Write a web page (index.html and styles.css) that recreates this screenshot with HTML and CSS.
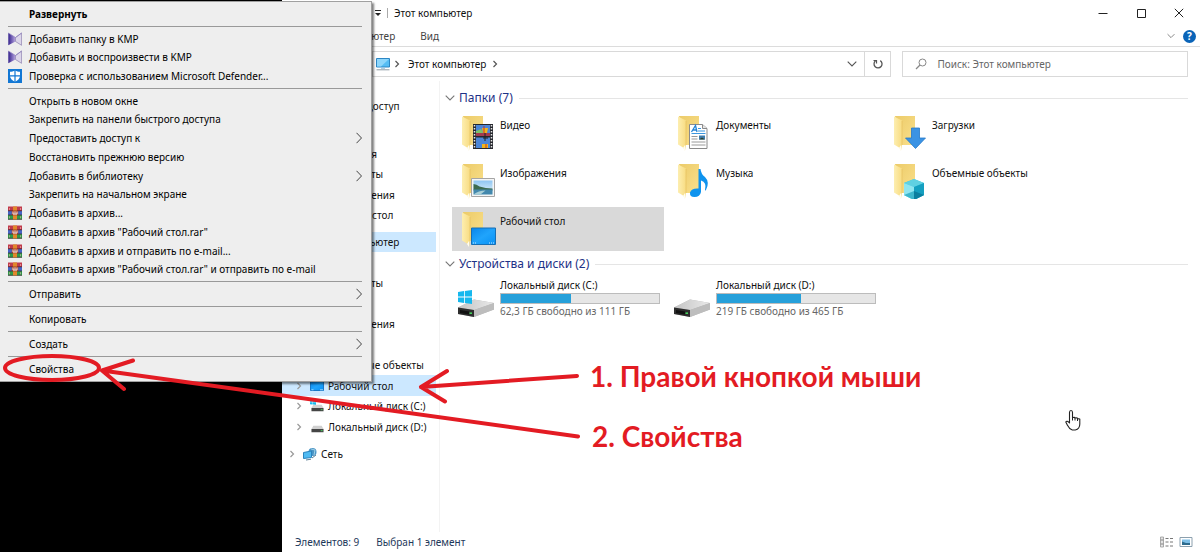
FILE: index.html
```html
<!DOCTYPE html>
<html lang="ru">
<head>
<meta charset="utf-8">
<title>Этот компьютер</title>
<link rel="stylesheet" href="styles.css">
</head>
<body>
<svg class="defs" width="0" height="0" aria-hidden="true">
  <defs>
    <linearGradient id="gFold" x1="0" x2="1"><stop offset="0" stop-color="#fdeeb0"/><stop offset="1" stop-color="#f8dc82"/></linearGradient>
    <linearGradient id="gBack" x1="0" x2="1" y1="0" y2="1"><stop offset="0" stop-color="#eccb69"/><stop offset="1" stop-color="#fae08c"/></linearGradient>
    <linearGradient id="gBlue" x1="0" x2="1" y1="0" y2="1"><stop offset="0" stop-color="#0a86ea"/><stop offset=".5" stop-color="#20a4fc"/><stop offset="1" stop-color="#0891f5"/></linearGradient>
    <linearGradient id="gKmp" x1="0" x2="1"><stop offset="0" stop-color="#33208c"/><stop offset="1" stop-color="#b9a8e0"/></linearGradient>
    <linearGradient id="gDisk" x1="0" x2="1"><stop offset="0" stop-color="#c4c4c4"/><stop offset="1" stop-color="#e9e9e9"/></linearGradient>
    <linearGradient id="gSky" x1="0" x2="0" y1="0" y2="1"><stop offset="0" stop-color="#8fc6f2"/><stop offset="1" stop-color="#e9f5fb"/></linearGradient>
    <symbol id="folder" viewBox="0 0 36 36">
      <path d="M2 1h20v29H8z" fill="url(#gBack)"/>
      <path d="M1 1.500l8 4v24l-1 6-2-3-5-3z" fill="url(#gFold)"/>
      <path d="M9 6v24" stroke="#e3be5c" stroke-width=".6"/>
      <path d="M6 33l2-3v6z" fill="#fffdf2"/>
    </symbol>
    <symbol id="kmp" viewBox="0 0 14 14">
      <path d="M.3 1L7.500 5.500v4L.3 13.300z" fill="url(#gKmp)"/>
      <path d="M13.600 1L7.500 5.500v4l6.100 3.800z" fill="#dcd6ea" stroke="#8a7eae" stroke-width=".7"/>
      <path d="M.5 1L7.500 5.500 13.600 1" fill="none" stroke="#8d7fc0" stroke-width=".7"/>
    </symbol>
    <symbol id="defender" viewBox="0 0 14 14">
      <path d="M0 0h14v14H0z" fill="#1277d4"/>
      <path d="M7 1.500c1.500 1 3.300 1.200 5 1.200v4c0 3-2.500 5-5 6-2.500-1-5-3-5-6v-4c1.700 0 3.500-.2 5-1.200z" fill="#fff"/>
      <path d="M7 1v12M1.500 6.900h11" stroke="#1277d4" stroke-width="1.200"/>
    </symbol>
    <symbol id="rar" viewBox="0 0 14 14">
      <path d="M0 .5h14v4.500H0z" fill="#c03a4a"/><path d="M0 5h14v4H0z" fill="#4565c4"/><path d="M0 9h14v4.500H0z" fill="#2f9a48"/>
      <path d="M0 4.800h14M0 9h14M0 13.300h14" stroke="#3c2334" stroke-width=".7"/>
      <path d="M5 .5h4v13H5z" fill="#e0872b"/>
      <path d="M3.800 4.500h6.400v4.800H3.800z" fill="#a33d22"/><path d="M5 5.500v2.600h4V5.500M7 5.300v2.500" fill="none" stroke="#fff" stroke-width=".9"/>
      <path d="M1.500 2v2M12.500 2v2M1.500 10.300v2M12.500 10.300v2" stroke="#f2b8b8" stroke-width=".6"/>
    </symbol>
    <symbol id="arrow" viewBox="0 0 6 12"><path d="M.5 .8L5.500 6 .5 11.200" fill="none" stroke="#444" stroke-width="1"/></symbol>
    <symbol id="chev" viewBox="0 0 6 8"><path d="M1.500 1L4.500 4 1.500 7" fill="none" stroke="currentColor" stroke-width="1.200"/></symbol>
    <symbol id="down" viewBox="0 0 10 6"><path d="M.7 .7L5 5 9.300 .7" fill="none" stroke="currentColor" stroke-width="1.100"/></symbol>
    <symbol id="pc" viewBox="0 0 14 14">
      <path d="M.5 1.500h13v8.500H.5z" fill="#55bdf4" stroke="#2c86c4"/><path d="M1 2h12L5 9.500H1z" fill="#8dd6fb"/>
      <path d="M5 11.300h4" stroke="#9bc4de"/><path d="M.5 12.800h13" stroke="#8d9aa3"/>
    </symbol>
    <symbol id="desk" viewBox="0 0 14 10"><path d="M.5 .5h13v9H.5z" fill="url(#gBlue)" stroke="#1678c8"/><path d="M1.500 8.800h2M10 8.800h3" stroke="#bfe4ff" stroke-width=".8"/></symbol>
    <symbol id="disk" viewBox="0 0 38 20">
      <path d="M1 9.500L17 1.500 37 5v6.500L17 19 1 16z" fill="#b5b5b5"/>
      <path d="M1 9.500L17 1.500 37 5 17 12z" fill="url(#gDisk)"/>
      <path d="M17 12L37 5v6.500L17 19z" fill="#bdbdbd"/>
      <path d="M1 9.500L17 12v7L1 16z" fill="#2d2d2d"/>
      <path d="M3 12l9 1.500v3L3 15z" fill="#111"/><path d="M12.500 15.200h2.500" stroke="#43d35b" stroke-width="1.600"/>
    </symbol>
    <symbol id="mdisk" viewBox="0 0 14 8"><path d="M2.500 .5h9L13.500 4H.5z" fill="#d0d0d0"/><path d="M.5 4h13v3.500H.5z" fill="#454545"/><path d="M10.500 5.800h2" stroke="#46d660"/></symbol>
    <symbol id="win" viewBox="0 0 14 14"><path d="M0 2l6-.9v5.500H0zM6.800 1L14 0v6.600H6.800zM0 7.400h6v5.500L0 12zM6.800 7.400H14V14l-7.200-1z" fill="#16b8ee"/></symbol>
  </defs>
</svg>

<div class="window">
  <header class="titlebar">
    <svg class="qat" viewBox="0 0 8 8"><path d="M1 1.500h6" stroke="#222"/><path d="M1 4h6L4 7z" fill="#222"/></svg>
    <span class="bar"></span>
    <h1 class="title">Этот компьютер</h1>
    <div class="controls">
      <button class="ctl" aria-label="Свернуть"><svg viewBox="0 0 10 10"><path d="M.5 5.500h9" stroke="#222"/></svg></button>
      <button class="ctl" aria-label="Развернуть окно"><svg viewBox="0 0 10 10"><path d="M1.500 1.500h8v8h-8z" fill="none" stroke="#222"/></svg></button>
      <button class="ctl" aria-label="Закрыть"><svg viewBox="0 0 10 10"><path d="M.8 .8l8.400 8.400M9.200 .8L.8 9.200" stroke="#222"/></svg></button>
    </div>
  </header>
  <nav class="tabs">
    <button class="tab">Компьютер</button>
    <button class="tab">Вид</button>
    <div class="helpers">
      <svg class="down"><use href="#down"/></svg>
      <button class="help" aria-label="Справка">?</button>
    </div>
  </nav>
  <div class="address">
    <div class="path">
      <svg class="i14"><use href="#pc"/></svg>
      <svg class="crumb"><use href="#chev"/></svg>
      <span class="where">Этот компьютер</span>
      <svg class="crumb"><use href="#chev"/></svg>
      <svg class="down dark"><use href="#down"/></svg>
      <button class="refresh" aria-label="Обновить"><svg viewBox="0 0 12 12"><path d="M3.500 2.800A4 4 0 1 0 8.300 2.600" fill="none" stroke="#555" stroke-width="1.300"/><path d="M1.500 2.500h3v3" fill="none" stroke="#555" stroke-width="1.200"/></svg></button>
    </div>
    <div class="search">
      <svg class="lens" viewBox="0 0 12 12"><circle cx="7.500" cy="4.500" r="3.500" fill="none" stroke="#888"/><path d="M5 7L1 11" stroke="#888" stroke-width="1.200"/></svg>
      <input class="query" type="text" aria-label="Поиск" placeholder="Поиск: Этот компьютер">
    </div>
  </div>

  <div class="body">
    <aside class="tree">
      <ul class="branch">
        <li class="node root">Быстрый доступ</li>
      </ul>
      <ul class="branch">
        <li class="node root">OneDrive</li>
        <li class="node">Вложения</li>
        <li class="node">Документы</li>
        <li class="node">Изображения</li>
        <li class="node">Рабочий стол</li>
      </ul>
      <ul class="branch">
        <li class="node root on">Этот компьютер</li>
        <li class="node">Видео</li>
        <li class="node">Документы</li>
        <li class="node">Музыка</li>
        <li class="node">Изображения</li>
        <li class="node">Загрузки</li>
        <li class="node">Объемные объекты</li>
        <li class="node on"><svg class="crumb"><use href="#chev"/></svg><svg class="i14"><use href="#desk"/></svg>Рабочий стол</li>
        <li class="node"><svg class="crumb"><use href="#chev"/></svg><svg class="i14" viewBox="0 0 14 14"><use href="#win" width="6" height="6"/><use href="#mdisk" y="5" x="1" width="13" height="8"/></svg>Локальный диск (C:)</li>
        <li class="node"><svg class="crumb"><use href="#chev"/></svg><svg class="i14" viewBox="0 0 14 14"><use href="#mdisk" y="5" x="1" width="13" height="8"/></svg>Локальный диск (D:)</li>
      </ul>
      <ul class="branch">
        <li class="node root"><svg class="crumb"><use href="#chev"/></svg><svg class="i14" viewBox="0 0 14 14"><circle cx="9.500" cy="5" r="4" fill="#4a94c4"/><path d="M8 2l4 1-1 5" fill="none" stroke="#9fd0e8"/><path d="M.5 5.500l8-1.500v6.500l-8 1z" fill="#4fbaf2" stroke="#2b83bd"/><path d="M3 13l5-.8M9 11l4-3" stroke="#5d7f96"/></svg>Сеть</li>
      </ul>
    </aside>

    <main class="content">
      <section class="group">
        <h2 class="head"><svg class="down"><use href="#down"/></svg>Папки (7)</h2>
        <div class="tiles">
          <button class="tile"><svg class="big" viewBox="0 0 36 36"><use href="#folder"/>
            <path d="M12 9h20v25H12z" fill="#26282e"/><path d="M15 10h14v11H15zM15 22.500h14V33H15z" fill="#4c86d8"/>
            <path d="M15 18h14v3H15z" fill="#a33b4e"/><path d="M15 16l5-2 2 4h-7z" fill="#7cc26a"/><path d="M21 13h6l-1 5h-4zM21 29h6v4h-6z" fill="#f1b51c"/><path d="M24 18v8M22 23h5" stroke="#222"/><path d="M23 11v7M25 29v4" stroke="#c3342b"/>
            <path d="M13.500 10v24M30.500 10v24" stroke="#e8e8e8" stroke-width="1.500" stroke-dasharray="1.500 1.500"/></svg><span class="name">Видео</span></button>
          <button class="tile"><svg class="big" viewBox="0 0 36 36"><use href="#folder"/>
            <path d="M12.500 9.500h13l4.500 4v20H12.500z" fill="#fff" stroke="#8a8a8a"/><path d="M25.500 9.500v4H30" fill="#e6e6e6" stroke="#8a8a8a"/>
            <path d="M14.500 17l4-6.500 1.500 6.500M16 15h4" fill="none" stroke="#2484d6" stroke-width="1.300"/><path d="M21 13.500h3M21 16h7M14.500 18.500h14" stroke="#3b97e0"/><path d="M14.500 21.500h6M14.500 24h6M14.500 27h14M14.500 30h14" stroke="#9a9a9a"/><path d="M22 20.500h6v4h-6z" fill="#3f7cab"/><path d="M22 24.500l3-2 3 2z" fill="#29402f"/></svg><span class="name">Документы</span></button>
          <button class="tile"><svg class="big" viewBox="0 0 36 36"><use href="#folder"/><path d="M18.500 13h8v10h6L22.500 33.500 12.500 23h6z" fill="#3b93e4" stroke="#2478c9" stroke-width=".8"/></svg><span class="name">Загрузки</span></button>
          <button class="tile"><svg class="big" viewBox="0 0 36 36"><use href="#folder"/>
            <path d="M10.500 15.500h23v18h-23z" fill="#f5f5f5" stroke="#a5a5a5"/><path d="M12.500 17.500h19v14h-19z" fill="url(#gSky)"/><path d="M12.500 21q3 0 6 2.500 6 2 13 2v2h-19z" fill="#3d6b50"/><path d="M12.500 26.500h19v5h-19z" fill="#4388ad"/><path d="M12.500 31.500q5-4 12-4l-5 4z" fill="#a9cfd6"/></svg><span class="name">Изображения</span></button>
          <button class="tile"><svg class="big" viewBox="0 0 36 36"><use href="#folder"/><path d="M21.500 6h2q.5 5 4.500 8 5 5 1 13-.5 1-1 0 2-8-4-9.500V29q-1 5-6.500 5-5 0-4.500-4.500 1.500-4.500 8.500-4z" fill="#0f93ee"/></svg><span class="name">Музыка</span></button>
          <button class="tile"><svg class="big" viewBox="0 0 36 36"><use href="#folder"/><path d="M11 20l10-4 10 4v12l-10 5-10-5z" fill="#35c3dd"/><path d="M11 20l10-4 10 4-10 4z" fill="#5fd0e2"/><path d="M11 20l10 4v13l-10-5z" fill="#8fe5f0"/><path d="M21 24l10-4v12l-10 5z" fill="#149fc0"/><path d="M21 28l10 4-10 5z" fill="#0b7f9f"/><path d="M11 32l10-4v9z" fill="#3db7cd"/></svg><span class="name">Объемные объекты</span></button>
          <button class="tile picked"><svg class="big" viewBox="0 0 36 36"><use href="#folder"/><path d="M10.500 17h24v16.500h-24z" fill="url(#gBlue)" stroke="#176fb5"/><path d="M12 32h3M28 32h5" stroke="#c8e8ff" stroke-dasharray="1 1"/></svg><span class="name">Рабочий стол</span></button>
        </div>
      </section>
      <section class="group">
        <h2 class="head"><svg class="down"><use href="#down"/></svg>Устройства и диски (2)</h2>
        <div class="tiles">
          <button class="tile drive"><svg class="hdd" viewBox="0 0 38 30"><use href="#disk" y="9" width="38" height="20"/><use href="#win" x="1" y="1" width="14" height="14"/></svg>
            <span class="info"><span>Локальный диск (C:)</span><span class="meter"><span class="used" style="width:44%"></span></span><span class="free">62,3 ГБ свободно из 111 ГБ</span></span></button>
          <button class="tile drive"><svg class="hdd" viewBox="0 0 38 30"><use href="#disk" y="9" width="38" height="20"/></svg>
            <span class="info"><span>Локальный диск (D:)</span><span class="meter"><span class="used" style="width:53%"></span></span><span class="free">219 ГБ свободно из 465 ГБ</span></span></button>
        </div>
      </section>
    </main>
  </div>

  <footer class="status">
    <span>Элементов: 9</span><span>Выбран 1 элемент</span>
    <div class="views">
      <svg class="view" viewBox="0 0 14 12"><path d="M.5 1h3v3h-3zM.5 4h3v4h-3zM.5 8h3v3h-3z" fill="#e4e4e4" stroke="#999" stroke-width=".8"/><path d="M5.500 2.500h8M5.500 6h8M5.500 10h8" stroke="#777" stroke-dasharray="3 1.500"/></svg>
      <svg class="view" viewBox="0 0 14 12"><path d="M1 1.500h12v9H1z" fill="#fff" stroke="#8ca0ae"/><path d="M3 3.500h8V9H3z" fill="#7dbfe8"/><path d="M3 5.500l4 1.500h4v2H3z" fill="#2d6b8e"/></svg>
    </div>
  </footer>
</div>

<div class="menu" role="menu">
  <div class="part">
    <button class="item strong" role="menuitem"><span class="slot"></span>Развернуть</button>
  </div>
  <div class="part">
    <button class="item" role="menuitem"><svg class="slot"><use href="#kmp"/></svg>Добавить папку в KMP</button>
    <button class="item" role="menuitem"><svg class="slot"><use href="#kmp"/></svg>Добавить и воспроизвести в KMP</button>
    <button class="item" role="menuitem"><svg class="slot"><use href="#defender"/></svg>Проверка с использованием Microsoft Defender...</button>
  </div>
  <div class="part">
    <button class="item" role="menuitem"><span class="slot"></span>Открыть в новом окне</button>
    <button class="item" role="menuitem"><span class="slot"></span>Закрепить на панели быстрого доступа</button>
    <button class="item" role="menuitem"><span class="slot"></span>Предоставить доступ к<svg class="more"><use href="#arrow"/></svg></button>
    <button class="item" role="menuitem"><span class="slot"></span>Восстановить прежнюю версию</button>
    <button class="item" role="menuitem"><span class="slot"></span>Добавить в библиотеку<svg class="more"><use href="#arrow"/></svg></button>
    <button class="item" role="menuitem"><span class="slot"></span>Закрепить на начальном экране</button>
    <button class="item" role="menuitem"><svg class="slot"><use href="#rar"/></svg>Добавить в архив...</button>
    <button class="item" role="menuitem"><svg class="slot"><use href="#rar"/></svg>Добавить в архив "Рабочий стол.rar"</button>
    <button class="item" role="menuitem"><svg class="slot"><use href="#rar"/></svg>Добавить в архив и отправить по e-mail...</button>
    <button class="item" role="menuitem"><svg class="slot"><use href="#rar"/></svg>Добавить в архив "Рабочий стол.rar" и отправить по e-mail</button>
  </div>
  <div class="part">
    <button class="item" role="menuitem"><span class="slot"></span>Отправить<svg class="more"><use href="#arrow"/></svg></button>
  </div>
  <div class="part">
    <button class="item" role="menuitem"><span class="slot"></span>Копировать</button>
  </div>
  <div class="part">
    <button class="item" role="menuitem"><span class="slot"></span>Создать<svg class="more"><use href="#arrow"/></svg></button>
  </div>
  <div class="part">
    <button class="item" role="menuitem"><span class="slot"></span>Свойства</button>
  </div>
</div>

<svg class="marks" width="1200" height="552" viewBox="0 0 1200 552" aria-hidden="true">
  <g fill="none" stroke="#e31b23" stroke-width="4" stroke-linecap="round" stroke-linejoin="round">
    <ellipse cx="52" cy="368" rx="47" ry="12"/>
    <path d="M133 360.500L102 370.500 124 389M102 370.500L578 436.500"/>
    <path d="M447 371L421 387l24 14.500M421 387L577 376"/>
  </g>
  <path d="M1069.500 421v-8.500q0-2 1.500-2t1.500 2v5l2-.3.5.8 2-.2.8.8 2 .4v5q0 5-4.500 6h-3q-3-1-5-5l-1.500-3q1-2 3.700 1z" fill="#fff" stroke="#222" stroke-width="1.100" stroke-linejoin="round"/>
  <path d="M1072.500 417v3.500M1075 417.500v3M1077.500 418.500v2.500" stroke="#222" stroke-width="1"/>
</svg>
<p class="note first">1. Правой кнопкой мыши</p>
<p class="note second">2. Свойства</p>
</body>
</html>
```
FILE: styles.css
```css
* { box-sizing: border-box; }
body {
  margin: 0;
  min-height: 100vh;
  display: flex;
  position: relative;
  padding-left: 282px;
  background: #000;
  color: #111;
  font: 10px/16px "Noto Sans", "Open Sans", sans-serif;
}
ul, h1, h2, p { margin: 0; padding: 0; list-style: none; font: inherit; }
button {
  margin: 0;
  padding: 0;
  border: 0;
  background: none;
  color: inherit;
  font: inherit;
  text-align: left;
}
svg { flex: none; display: block; }
.defs { position: absolute; }

.window { flex: 1; min-width: 0; display: flex; flex-direction: column; background: #fff; }
.titlebar { display: flex; align-items: center; height: 26px; padding: 0 2px 0 92px; }
.qat { width: 8px; height: 8px; }
.bar { width: 1px; height: 10px; margin: 0 6px 0 5px; background: #aaa; }
.controls { margin-left: auto; display: flex; }
.ctl { width: 38px; height: 26px; display: flex; align-items: center; justify-content: center; }
.ctl svg { width: 10px; height: 10px; }

.tabs { display: flex; align-items: center; height: 21px; padding: 0 4px 0 58px; border-bottom: 1px solid #dcdcdc; color: #444; }
.tab { margin-right: 25px; }
.helpers { margin-left: auto; display: flex; align-items: center; gap: 8px; color: #999; }
.down { width: 10px; height: 6px; color: #777; }
.helpers .down { width: 8px; }
.help { width: 13px; height: 13px; border-radius: 50%; background: #0a64b8; color: #fff; font-weight: 700; line-height: 13px; text-align: center; }

.address { display: flex; gap: 11px; padding: 4px 12px 4px 90px; }
.path, .search { display: flex; align-items: center; height: 26px; border: 1px solid #d9d9d9; }
.path { flex: 1; min-width: 0; padding-left: 3px; }
.path .down { margin-left: auto; margin-right: 7px; }
.search { width: 35%; max-width: 291px; padding-left: 12px; }
.i14 { width: 14px; height: 14px; }
.crumb { width: 6px; height: 8px; margin: 0 6px 0 4px; color: #555; }
.where { margin: 0 2px; }
.dark { color: #555; }
.refresh { width: 26px; height: 24px; border-left: 1px solid #d9d9d9; display: flex; align-items: center; justify-content: center; }
.refresh svg { width: 12px; height: 12px; }
.lens { width: 12px; height: 12px; }
.query { flex: 1; min-width: 0; margin-left: 10px; padding: 0; border: 0; outline: 0; background: none; font: inherit; }
.query::placeholder { color: #666; opacity: 1; }

.body { flex: 1; display: flex; }
.tree { width: 158px; padding: 15px 3px 0 0; border-right: 1px solid #f3f3f3; white-space: nowrap; }
.branch { margin-bottom: 7px; }
.node { display: flex; align-items: center; height: 20px; padding-left: 46px; }
.node:nth-child(even) { height: 21px; }
.root { padding-left: 39px; }
.on { background: #cce8ff; }
.node .crumb { color: #999; margin: 0 8px 0 0; }
.node .i14 { margin-right: 4px; }
.node:has(svg) { padding-left: 14px; }
.root:has(svg) { padding-left: 7px; }

.content { flex: 1; min-width: 0; padding: 8px 12px 0 5px; }
.head { display: flex; align-items: center; gap: 4px; height: 18px; color: #1e3287; font-size: 12px; }
.head::after { content: ""; flex: 1; height: 1px; margin-left: 2px; background: #e5e5e5; }
.tiles { display: grid; grid-template-columns: repeat(3, 212px); gap: 4px; padding: 4px 0 4px 7px; }
.tile { display: flex; align-items: flex-start; height: 44px; padding: 4px 0 0 9px; }
.picked { background: #d9d9d9; }
.big { width: 36px; height: 36px; margin-right: 3px; }
.name { padding-top: 2px; }
.drive { padding: 1px 4px 0 5px; gap: 5px; }
.hdd { width: 38px; height: 30px; margin-top: 11px; }
.info { display: grid; grid-template-columns: 160px; line-height: 15px; }
.meter { height: 11px; border: 1px solid #bcbcbc; background: #e6e6e6; }
.used { display: block; height: 100%; background: #26a0da; }
.free { color: #666; }

.status { display: flex; align-items: center; gap: 17px; height: 20px; padding: 0 7px 0 13px; color: #1e395b; }
.views { margin-left: auto; display: flex; gap: 5px; }
.view { width: 14px; height: 12px; }

.menu {
  position: absolute;
  left: 0;
  top: 1px;
  width: 372px;
  padding: 2px 9px 3px 8px;
  border: 1px solid #a0a0a0;
  border-left: 0;
  background: #eee;
  box-shadow: 2px 2px 2px rgba(0, 0, 0, .5);
  color: #000;
}
.part + .part::before { content: ""; display: block; height: 1px; margin: 3px 0 2px; background: #999; }
.item { display: flex; align-items: center; width: 100%; height: 19px; white-space: nowrap; }
.item:nth-child(4n + 2) { height: 18px; }
.strong { font-weight: 700; }
.slot { width: 14px; height: 14px; margin-right: 7px; }
.more { width: 6px; height: 12px; margin-left: auto; }

.marks { position: absolute; left: 0; top: 0; }
.note { position: absolute; color: #e31b23; font: 700 28px/32px Lato, "Open Sans", sans-serif; white-space: nowrap; }
.first { left: 590px; top: 360px; }
.second { left: 592px; top: 420px; }
```
